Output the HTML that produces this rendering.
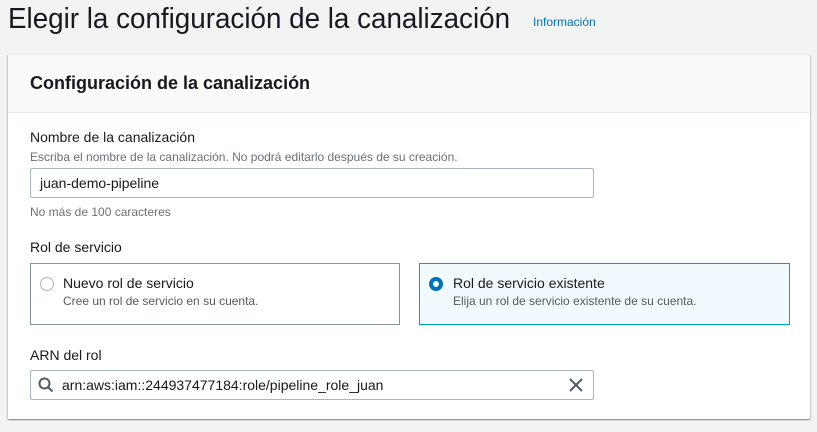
<!DOCTYPE html>
<html><head><meta charset="utf-8"><style>
*{margin:0;padding:0;box-sizing:border-box}
body{width:817px;height:432px;background:#f2f3f3;font-family:"Liberation Sans",sans-serif;color:#16191f;position:relative;overflow:hidden}
.a{position:absolute;white-space:nowrap}
.panel{position:absolute;left:8px;top:54px;width:802px;height:365px;background:#fff;border-top:1px solid #eaeded;box-shadow:0 1px 1px 0 rgba(0,28,36,.3),1px 1px 1px 0 rgba(0,28,36,.15),-1px 1px 1px 0 rgba(0,28,36,.15)}
.hdr{position:absolute;left:0;top:0;width:802px;height:58px;background:#fafafa;border-bottom:1px solid #eaeded}
.inp{position:absolute;border:1px solid #aab7b8;background:#fff;border-radius:2px}
.tile{position:absolute;border:1px solid #879596;background:#fff}
</style></head><body>
<div class="a" style="left:8px;top:2px;font-size:28.5px;line-height:34px;transform:scaleX(.975);transform-origin:left">Elegir la configuración de la canalización</div>
<div class="a" style="left:533px;top:15px;font-size:12px;color:#0073bb">Información</div>
<div class="panel"><div class="hdr"></div></div>
<div class="a" style="left:30px;top:72px;font-size:18px;font-weight:bold;line-height:22px">Configuración de la canalización</div>
<div class="a" style="left:30px;top:129px;font-size:14px">Nombre de la canalización</div>
<div class="a" style="left:30px;top:150px;font-size:12px;color:#687078">Escriba el nombre de la canalización. No podrá editarlo después de su creación.</div>
<div class="inp" style="left:30px;top:168px;width:564px;height:30px"></div>
<div class="a" style="left:40px;top:175px;font-size:14px">juan-demo-pipeline</div>
<div class="a" style="left:30px;top:205px;font-size:12px;color:#687078">No más de 100 caracteres</div>
<div class="a" style="left:30px;top:239px;font-size:14px">Rol de servicio</div>
<div class="tile" style="left:30px;top:263px;width:370px;height:62px"></div>
<div style="position:absolute;left:40px;top:277px;width:14px;height:14px;border:1px solid #aab7b8;border-radius:50%"></div>
<div class="a" style="left:63px;top:275px;font-size:14px">Nuevo rol de servicio</div>
<div class="a" style="left:63px;top:294px;font-size:12px;color:#545b64">Cree un rol de servicio en su cuenta.</div>
<div class="tile" style="left:419px;top:263px;width:371px;height:62px;border-color:#00a1c9;background:#f1faff"></div>
<div style="position:absolute;left:429px;top:277px;width:14px;height:14px;border:4px solid #0073bb;border-radius:50%;background:#fff"></div>
<div class="a" style="left:453px;top:275px;font-size:14px">Rol de servicio existente</div>
<div class="a" style="left:453px;top:294px;font-size:12px;color:#545b64">Elija un rol de servicio existente de su cuenta.</div>
<div class="a" style="left:30px;top:347px;font-size:14px">ARN del rol</div>
<div class="inp" style="left:30px;top:370px;width:564px;height:30px"></div>
<svg style="position:absolute;left:38px;top:377px" width="16" height="16" viewBox="0 0 16 16"><circle cx="6.5" cy="6.5" r="5" fill="none" stroke="#545b64" stroke-width="2"/><path d="M10 10l4.5 4.5" stroke="#545b64" stroke-width="2"/></svg>
<div class="a" style="left:62px;top:377px;font-size:14px">arn:aws:iam::244937477184:role/pipeline_role_juan</div>
<svg style="position:absolute;left:569px;top:378px" width="14" height="14" viewBox="0 0 14 14"><path d="M1 1l12 12M13 1L1 13" stroke="#545b64" stroke-width="2"/></svg>
</body></html>
